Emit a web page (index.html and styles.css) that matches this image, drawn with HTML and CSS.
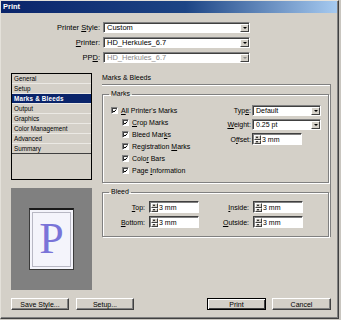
FILE: index.html
```html
<!DOCTYPE html>
<html lang="en">
<head>
    <meta charset="UTF-8">
    <title>Print</title>
    <link rel="stylesheet" href="styles.css">
</head>
<body>
<div class="window">
    <div class="titlebar">Print</div>

    <div class="head">
        <div class="field-row">
            <label class="lbl">Printer <u>S</u>tyle:</label>
            <div class="select wide"><span class="val">Custom</span><span class="drop"><i></i></span></div>
        </div>
        <div class="field-row">
            <label class="lbl"><u>P</u>rinter:</label>
            <div class="select wide"><span class="val">HD_Herkules_6.7</span><span class="drop"><i></i></span></div>
        </div>
        <div class="field-row">
            <label class="lbl">PP<u>D</u>:</label>
            <div class="select wide disabled"><span class="val">HD_Herkules_6.7</span><span class="drop"><i></i></span></div>
        </div>
    </div>

    <div class="main">
        <div class="side">
            <ul class="nav">
                <li>General</li>
                <li>Setup</li>
                <li class="active">Marks &amp; Bleeds</li>
                <li>Output</li>
                <li>Graphics</li>
                <li>Color Management</li>
                <li>Advanced</li>
                <li class="last">Summary</li>
            </ul>
            <div class="preview">
                <div class="page">
                    <div class="trim">P</div>
                </div>
            </div>
        </div>

        <div class="panel">
            <div class="panel-title">Marks &amp; Bleeds</div>
            <div class="panel-body">
                <fieldset class="group marks">
                    <legend>Marks</legend>
                    <div class="marks-body">
                        <div class="checks">
                            <div class="check"><span class="cb"><svg viewBox="0 0 7 7"><path d="M1 3.2l1.8 1.8 3.2-3.6"/></svg></span><span><u>A</u>ll Printer's Marks</span></div>
                            <div class="check sub"><span class="cb"><svg viewBox="0 0 7 7"><path d="M1 3.2l1.8 1.8 3.2-3.6"/></svg></span><span><u>C</u>rop Marks</span></div>
                            <div class="check sub"><span class="cb"><svg viewBox="0 0 7 7"><path d="M1 3.2l1.8 1.8 3.2-3.6"/></svg></span><span>Bleed Mar<u>k</u>s</span></div>
                            <div class="check sub"><span class="cb"><svg viewBox="0 0 7 7"><path d="M1 3.2l1.8 1.8 3.2-3.6"/></svg></span><span>Registration <u>M</u>arks</span></div>
                            <div class="check sub"><span class="cb"><svg viewBox="0 0 7 7"><path d="M1 3.2l1.8 1.8 3.2-3.6"/></svg></span><span>Colo<u>r</u> Bars</span></div>
                            <div class="check sub"><span class="cb"><svg viewBox="0 0 7 7"><path d="M1 3.2l1.8 1.8 3.2-3.6"/></svg></span><span>Page <u>I</u>nformation</span></div>
                        </div>
                        <div class="opts">
                            <label class="lbl">Typ<u>e</u>:</label>
                            <div class="select"><span class="val">Default</span><span class="drop"><i></i></span></div>
                            <label class="lbl"><u>W</u>eight:</label>
                            <div class="select"><span class="val">0.25 pt</span><span class="drop"><i></i></span></div>
                            <label class="lbl">O<u>f</u>fset:</label>
                            <div class="spin"><span class="arrows"><b class="up"></b><b class="down"></b></span><span class="val">3 mm</span></div>
                        </div>
                    </div>
                </fieldset>

                <fieldset class="group bleed">
                    <legend>Bleed</legend>
                    <div class="bleed-grid">
                        <label class="lbl"><u>T</u>op:</label>
                        <div class="spin"><span class="arrows"><b class="up"></b><b class="down"></b></span><span class="val">3 mm</span></div>
                        <label class="lbl"><u>I</u>nside:</label>
                        <div class="spin"><span class="arrows"><b class="up"></b><b class="down"></b></span><span class="val">3 mm</span></div>
                        <label class="lbl"><u>B</u>ottom:</label>
                        <div class="spin"><span class="arrows"><b class="up"></b><b class="down"></b></span><span class="val">3 mm</span></div>
                        <label class="lbl"><u>O</u>utside:</label>
                        <div class="spin"><span class="arrows"><b class="up"></b><b class="down"></b></span><span class="val">3 mm</span></div>
                    </div>
                </fieldset>
            </div>
        </div>
    </div>

    <div class="buttons">
        <button class="btn">Save Style...</button>
        <button class="btn">Setup...</button>
        <span class="spacer"></span>
        <button class="btn default">Print</button>
        <button class="btn">Cancel</button>
    </div>
</div>
</body>
</html>
```

FILE: styles.css
```css
* {
    box-sizing: border-box;
}
body {
    margin: 0;
    background-color: #c9c6c0;
    font-family: "Liberation Sans", Arial, sans-serif;
    font-size: 7px;
    color: #000;
}
u {
    text-decoration: underline;
    text-underline-offset: 1px;
}

.window {
    width: 339px;
    height: 319px;
    background-color: #d4d0c8;
    border-top: 1px solid #e4e1da;
    border-left: 1px solid #e4e1da;
    border-right: 1px solid #404040;
    border-bottom: 1px solid #404040;
    box-shadow: inset -1px -1px #808080;
}
.titlebar {
    height: 12px;
    line-height: 12px;
    padding-left: 2px;
    margin-right: 1px;
    background: linear-gradient(to right, #0a246a, #1d4585 55%, #a6caf0);
    color: #fff;
    font-weight: bold;
    font-size: 7.5px;
}

/* printer selection */
.head {
    padding-top: 9px;
}
.field-row {
    display: flex;
    align-items: center;
    height: 11px;
    margin-bottom: 4px;
}
.field-row .lbl {
    width: 99px;
    text-align: right;
    margin-right: 3px;
    font-size: 7.5px;
}
.lbl {
    white-space: nowrap;
}

.select {
    display: flex;
    height: 11px;
    background-color: #fff;
    border: 1px solid;
    border-color: #808080 #fff #fff #808080;
    box-shadow: inset 1px 1px #404040;
    padding: 1px 0 0 1px;
}
.select.wide {
    width: 147px;
    font-size: 7.5px;
}
.select .val {
    flex: 1;
    padding-left: 2px;
    line-height: 8px;
    white-space: nowrap;
    overflow: hidden;
}
.select.disabled .val {
    color: #8a8a8a;
}
.drop {
    width: 9px;
    height: 8px;
    background-color: #d4d0c8;
    border: 1px solid;
    border-color: #fff #404040 #404040 #fff;
    display: flex;
    align-items: center;
    justify-content: center;
}
.drop i {
    width: 0;
    height: 0;
    border-left: 2px solid transparent;
    border-right: 2px solid transparent;
    border-top: 2px solid #000;
}
.disabled .drop i {
    border-top-color: #8a8a8a;
}

/* main area */
.main {
    display: flex;
    margin-top: 10px;
    padding-left: 10px;
    height: 217px;
}
.side {
    width: 81px;
}
.nav {
    list-style: none;
    margin: 0;
    padding: 0;
    height: 107px;
    border: 1px solid #000;
    font-size: 6.3px;
}
.nav li {
    height: 10px;
    line-height: 9px;
    padding-left: 2px;
    border-bottom: 1px solid #ebe9e4;
}
.nav li.active {
    background-color: #0a246a;
    color: #fff;
    font-weight: bold;
    letter-spacing: 0.2px;
}
.nav li.last {
    border-bottom-color: #404040;
}
.preview {
    margin-top: 8px;
    height: 102px;
    background-color: #808080;
    display: flex;
    align-items: center;
    justify-content: center;
}
.page {
    width: 45px;
    height: 62px;
    background-color: #f4f4fb;
    border: 1px solid #3a3a3a;
    border-top: 2px solid #1a1a1a;
    padding: 2px;
}
.trim {
    height: 100%;
    border: 1px solid #b8b8c4;
    font-family: "Liberation Serif", serif;
    font-size: 44px;
    line-height: 52px;
    text-align: center;
    color: #7a74d8;
}

.panel {
    width: 229px;
    margin-left: 10px;
}
.panel-title {
    height: 11px;
    line-height: 10px;
}
.panel-body {
    border-top: 1px solid #808080;
    border-right: 1px solid #808080;
    box-shadow: inset 0 1px #fff;
    padding-top: 5px;
    padding-right: 1px;
}

.group {
    margin: 0;
    border: 1px solid #808080;
    box-shadow: 1px 1px #fff, inset 1px 1px #fff;
    padding: 0 7px 0 6px;
}
.group legend {
    padding: 0 2px;
    line-height: 8px;
    height: 8px;
}

.marks {
    padding-top: 6px;
    padding-bottom: 6px;
}
.marks-body {
    display: flex;
}
.checks {
    flex: 1;
    padding-left: 2px;
}
.check {
    display: flex;
    align-items: center;
    height: 12px;
    white-space: nowrap;
}
.check.sub {
    padding-left: 11px;
}
.cb {
    width: 7px;
    height: 7px;
    margin-right: 3px;
    background-color: #fff;
    border: 1px solid;
    border-color: #808080 #fff #fff #808080;
    box-shadow: inset 1px 1px #404040;
    display: flex;
}
.cb svg {
    width: 6px;
    height: 6px;
    fill: none;
    stroke: #000;
    stroke-width: 1.4;
}
.opts {
    display: grid;
    grid-template-columns: 40px 69px;
    column-gap: 1px;
    row-gap: 3px;
    align-items: center;
    padding-top: 1px;
    align-self: flex-start;
}
.opts .lbl {
    text-align: right;
}

.spin {
    display: flex;
    width: 50px;
    height: 12px;
    background-color: #fff;
    border: 1px solid;
    border-color: #404040 #fff #fff #404040;
    box-shadow: inset 1px 1px #808080;
    padding: 1px 0 0 1px;
}
.spin .val {
    padding-left: 1px;
    line-height: 9px;
}
.arrows {
    display: flex;
    flex-direction: column;
    width: 7px;
}
.arrows b {
    flex: 1;
    background-color: #d4d0c8;
    border: 1px solid;
    border-color: #fff #404040 #404040 #fff;
    position: relative;
}
.arrows b::after {
    content: "";
    position: absolute;
    left: 1px;
    width: 0;
    height: 0;
    border-left: 1.5px solid transparent;
    border-right: 1.5px solid transparent;
}
.arrows .up::after {
    top: 0;
    border-bottom: 2px solid #000;
}
.arrows .down::after {
    top: 0;
    border-top: 2px solid #000;
}

.bleed {
    margin-top: 5px;
    padding-top: 5px;
    padding-bottom: 8px;
}
.bleed-grid {
    display: grid;
    grid-template-columns: 36px 50px 46px 50px;
    column-gap: 4px;
    row-gap: 3px;
    align-items: center;
}
.bleed-grid .lbl {
    text-align: right;
}

/* dialog buttons */
.buttons {
    display: flex;
    margin-top: 8px;
    padding: 0 7px 0 10px;
}
.spacer {
    flex: 1;
}
.btn {
    height: 12px;
    width: 58px;
    padding: 0;
    font-family: inherit;
    font-size: 7px;
    line-height: 9px;
    background-color: #d4d0c8;
    border: 1px solid;
    border-color: #fff #404040 #404040 #fff;
    box-shadow: inset -1px -1px #808080;
    color: #000;
    margin-right: 7px;
}
.btn.default {
    width: 59px;
    border: 1px solid #000;
    box-shadow: inset 1px 1px #fff, inset -1px -1px #404040;
    margin-right: 6px;
}
.btn:last-child {
    width: 59px;
    margin-right: 0;
}
```
